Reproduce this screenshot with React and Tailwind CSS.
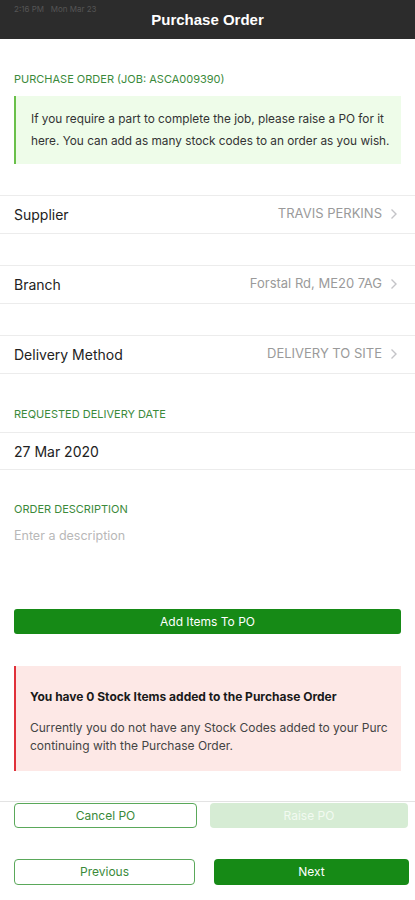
import React from "react";

function Chevron() {
  return (
    <svg width="8" height="12" viewBox="0 0 8 12" className="ml-2 shrink-0">
      <path d="M1.5 1.5 L6 6 L1.5 10.5" fill="none" stroke="#c4c4c8" strokeWidth="1.4" />
    </svg>
  );
}

function Row({ label, value }) {
  return (
    <div className="h-[39px] flex items-center justify-between px-[14px] border-y border-[#ececec]">
      <span className="text-[14px] text-[#222]">{label}</span>
      <div className="flex items-center pr-[3px]">
        <span className="text-[13px] text-[#9a9a9a]">{value}</span>
        <Chevron />
      </div>
    </div>
  );
}

function SectionLabel({ children, className = "" }) {
  return (
    <div className={`px-[14px] text-[11px] text-[#3b8a3b] ${className}`}>
      {children}
    </div>
  );
}

export default function App() {
  return (
    <div className="w-[415px] h-[900px] bg-white overflow-hidden font-['Inter','Liberation_Sans',sans-serif] flex flex-col">
      <div className="h-[39px] shrink-0 bg-[#2c2c2c] relative flex items-center justify-center">
        <span className="absolute left-[14px] top-[3px] text-[8px] text-[#555]">2:16 PM&nbsp;&nbsp;&nbsp;Mon Mar 23</span>
        <span className="text-white text-[15px] font-bold mt-[1px] font-['Liberation_Sans',Arial,sans-serif]">Purchase Order</span>
      </div>

      <SectionLabel className="mt-[32px]">PURCHASE ORDER (JOB: ASCA009390)</SectionLabel>

      <div className="mx-[14px] mt-[8px] h-[68px] shrink-0 bg-[#eefce9] border-l-2 border-[#6ac04a] flex items-center pl-[15px] pr-[8px]">
        <p className="text-[11.8px] leading-[22px] text-[#333]">
          If you require a part to complete the job, please raise a PO for it here. You can add as many stock codes to an order as you wish.
        </p>
      </div>

      <div className="mt-[31px] flex flex-col gap-[31px]">
        <Row label="Supplier" value="TRAVIS PERKINS" />
        <Row label="Branch" value="Forstal Rd, ME20 7AG" />
        <Row label="Delivery Method" value="DELIVERY TO SITE" />
      </div>

      <SectionLabel className="mt-[32px]">REQUESTED DELIVERY DATE</SectionLabel>
      <div className="mt-[10px] h-[38px] shrink-0 border-y border-[#ececec] flex items-center px-[14px] text-[14px] text-[#222]">
        27 Mar 2020
      </div>

      <SectionLabel className="mt-[31px]">ORDER DESCRIPTION</SectionLabel>
      <div className="px-[14px] mt-[9px] text-[12.5px] text-[#b8b8b8]">Enter a description</div>

      <div className="mx-[14px] mt-[64px] h-[25px] shrink-0 rounded-[3px] bg-[#168a16] flex items-center justify-center text-white text-[12px]">
        Add Items To PO
      </div>

      <div className="mx-[14px] mt-[32px] h-[105px] shrink-0 bg-[#fde8e6] border-l-2 border-[#e0313a] pl-[14px] pt-[22px] overflow-hidden">
        <div className="text-[12px] font-bold text-[#1a1a1a] whitespace-nowrap">You have 0 Stock Items added to the Purchase Order</div>
        <div className="mt-[13px] text-[12px] leading-[18px] text-[#444]">
          <div className="whitespace-nowrap overflow-hidden">Currently you do not have any Stock Codes added to your Purc</div>
          <div>continuing with the Purchase Order.</div>
        </div>
      </div>

      <div className="mt-[30px] border-t border-[#e3e3e3] pt-[1px] pl-[14px] flex gap-[13px]">
        <div className="w-[183px] h-[25px] shrink-0 rounded-[4px] border border-[#5aa85a] flex items-center justify-center text-[12px] text-[#3a8a3a]">
          Cancel PO
        </div>
        <div className="w-[198px] h-[25px] shrink-0 rounded-[4px] bg-[#d6ecd4] flex items-center justify-center text-[12px] text-[#f2faf1]">
          Raise PO
        </div>
      </div>

      <div className="mt-[31px] pl-[14px] flex gap-[19px]">
        <div className="w-[181px] h-[26px] shrink-0 rounded-[4px] border border-[#5aa85a] flex items-center justify-center text-[12px] text-[#3a8a3a]">
          Previous
        </div>
        <div className="w-[195px] h-[26px] shrink-0 rounded-[4px] bg-[#168a16] flex items-center justify-center text-[12px] text-white">
          Next
        </div>
      </div>
    </div>
  );
}
